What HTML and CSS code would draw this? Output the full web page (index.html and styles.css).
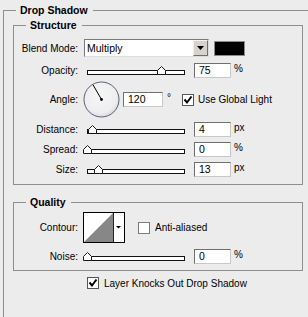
FILE: index.html
```html
<!DOCTYPE html>
<html>
<head>
<meta charset="UTF-8">
<title>Drop Shadow</title>
<link rel="stylesheet" href="styles.css">
</head>
<body>

<fieldset class="panel">
	<legend class="panel-title">Drop Shadow</legend>

	<fieldset class="group group-structure">
		<legend class="group-title">Structure</legend>

		<div class="row">
			<span class="label">Blend Mode:</span>
			<div class="select">
				<span class="select-value">Multiply</span>
				<span class="select-btn">
					<svg width="7" height="4" viewBox="0 0 7 4"><polygon points="0,0 7,0 3.5,4" fill="#000"/></svg>
				</span>
			</div>
			<span class="swatch"></span>
		</div>

		<div class="row row-opacity">
			<span class="label">Opacity:</span>
			<div class="slider">
				<div class="track"></div>
				<svg class="thumb" style="left: 70px" width="9" height="9" viewBox="0 0 9 9"><polygon points="4.5,0.5 8.5,4.5 8.5,8.5 0.5,8.5 0.5,4.5" fill="#fff" stroke="#1a1a1a"/></svg>
			</div>
			<span class="field">75</span>
			<span class="unit">%</span>
		</div>

		<div class="row row-angle">
			<span class="label">Angle:</span>
			<svg class="dial" width="37" height="37" viewBox="0 0 37 37">
				<defs>
					<radialGradient id="dialFill" cx="45%" cy="40%" r="60%">
						<stop offset="0" stop-color="#f6f6f6"/>
						<stop offset="0.8" stop-color="#eeeef0"/>
						<stop offset="1" stop-color="#d8dbe2"/>
					</radialGradient>
				</defs>
				<circle cx="18.5" cy="18.5" r="17.5" fill="url(#dialFill)" stroke="#5a6172"/>
				<line x1="18.5" y1="18.5" x2="10" y2="3.8" stroke="#000"/>
				<circle cx="18.5" cy="18.5" r="1.4" fill="#000"/>
			</svg>
			<span class="field field-angle">120</span>
			<span class="degree">&deg;</span>
			<span class="check checked">
				<svg width="10" height="10" viewBox="0 0 10 10"><path d="M1.5 4.5 L4 7.5 L8.5 1.5" fill="none" stroke="#000" stroke-width="2"/></svg>
			</span>
			<span class="check-text">Use Global Light</span>
		</div>

		<div class="row">
			<span class="label">Distance:</span>
			<div class="slider">
				<div class="track"></div>
				<svg class="thumb" style="left: 1px" width="9" height="9" viewBox="0 0 9 9"><polygon points="4.5,0.5 8.5,4.5 8.5,8.5 0.5,8.5 0.5,4.5" fill="#fff" stroke="#1a1a1a"/></svg>
			</div>
			<span class="field">4</span>
			<span class="unit">px</span>
		</div>

		<div class="row">
			<span class="label">Spread:</span>
			<div class="slider">
				<div class="track"></div>
				<svg class="thumb" style="left: -4px" width="9" height="9" viewBox="0 0 9 9"><polygon points="4.5,0.5 8.5,4.5 8.5,8.5 0.5,8.5 0.5,4.5" fill="#fff" stroke="#1a1a1a"/></svg>
			</div>
			<span class="field">0</span>
			<span class="unit">%</span>
		</div>

		<div class="row">
			<span class="label">Size:</span>
			<div class="slider">
				<div class="track"></div>
				<svg class="thumb" style="left: 7px" width="9" height="9" viewBox="0 0 9 9"><polygon points="4.5,0.5 8.5,4.5 8.5,8.5 0.5,8.5 0.5,4.5" fill="#fff" stroke="#1a1a1a"/></svg>
			</div>
			<span class="field">13</span>
			<span class="unit">px</span>
		</div>
	</fieldset>

	<fieldset class="group group-quality">
		<legend class="group-title">Quality</legend>

		<div class="row row-contour">
			<span class="label">Contour:</span>
			<svg class="contour" width="42" height="31" viewBox="0 0 42 31">
				<rect x="0.5" y="0.5" width="41" height="30" fill="#fff" stroke="#000"/>
				<polygon points="1,30 30,1 30,30" fill="#878787"/>
				<line x1="30.5" y1="1" x2="30.5" y2="30" stroke="#222"/>
				<polygon points="33,14 38,14 35.5,16.5" fill="#000"/>
			</svg>
			<span class="check check-anti"></span>
			<span class="check-text">Anti-aliased</span>
		</div>

		<div class="row row-noise">
			<span class="label">Noise:</span>
			<div class="slider">
				<div class="track"></div>
				<svg class="thumb" style="left: -4px" width="9" height="9" viewBox="0 0 9 9"><polygon points="4.5,0.5 8.5,4.5 8.5,8.5 0.5,8.5 0.5,4.5" fill="#fff" stroke="#1a1a1a"/></svg>
			</div>
			<span class="field">0</span>
			<span class="unit">%</span>
		</div>
	</fieldset>

	<div class="row row-knock">
		<span class="check checked">
			<svg width="10" height="10" viewBox="0 0 10 10"><path d="M1.5 4.5 L4 7.5 L8.5 1.5" fill="none" stroke="#000" stroke-width="2"/></svg>
		</span>
		<span class="check-text">Layer Knocks Out Drop Shadow</span>
	</div>
</fieldset>

</body>
</html>
```

FILE: styles.css
```css
html,
body
{
	margin: 0;
	height: 100%;
	overflow: hidden;
}

body
{
	background-color: #ececec;
	font-family: "Liberation Sans", Arial, sans-serif;
	font-size: 10px;
	color: #000;
}

.panel
{
	margin: 3px 0 0 3px;
	padding: 1px 0 0 9px;
	width: calc(100% - 3px);
	height: calc(100% - 3px);
	box-sizing: border-box;
	border: 1px solid #8e8e8e;
	border-right: none;
	border-bottom: none;
}

.panel-title,
.group-title
{
	padding: 0 5px 0 4px;
	font-size: 10.5px;
	font-weight: bold;
	line-height: 14px;
}

.panel-title
{
	margin-left: 3px;
}

.group
{
	margin: 0;
	width: 290px;
	box-sizing: border-box;
	border: 1px solid #8e8e8e;
}

.group-title
{
	margin-left: 12px;
}

.group-structure
{
	padding: 6px 0 5px 0;
}

.group-quality
{
	margin-top: 10px;
	padding: 3px 0 4px 0;
}

.row
{
	display: flex;
	align-items: center;
	height: 20px;
}

.row-opacity
{
	margin-top: 2px;
}

.row-angle
{
	height: 39px;
}

.row-contour
{
	height: 31px;
}

.row-noise
{
	margin-top: 3px;
}

.row-knock
{
	margin-top: 2px;
	padding-left: 74px;
}

.label
{
	width: 64px;
	flex: none;
	text-align: right;
}

/* blend mode */

.select
{
	display: flex;
	margin-left: 6px;
	width: 125px;
	height: 18px;
	box-sizing: border-box;
	border: 1px solid;
	border-color: #7a7a7a #dcdcdc #dcdcdc #7a7a7a;
	background-color: #fff;
}

.select-value
{
	flex: 1;
	padding-left: 2px;
	line-height: 16px;
	font-size: 10.5px;
}

.select-btn
{
	display: flex;
	align-items: center;
	justify-content: center;
	width: 15px;
	box-sizing: border-box;
	border: 1px solid;
	border-color: #f4f4f4 #6e6e6e #6e6e6e #f4f4f4;
	background-color: #d6d3ce;
}

.swatch
{
	margin-left: 5px;
	width: 31px;
	height: 15px;
	box-sizing: border-box;
	border: 1px solid #8a8a8a;
	background-color: #000;
}

/* sliders */

.slider
{
	position: relative;
	display: flex;
	align-items: flex-end;
	margin-left: 9px;
	width: 98px;
	height: 9px;
	flex: none;
}

.track
{
	width: 100%;
	height: 5px;
	box-sizing: border-box;
	border: 1px solid #111;
	background-color: #fff;
}

.thumb
{
	position: absolute;
	bottom: 0;
}

.field
{
	margin-left: 9px;
	width: 37px;
	height: 15px;
	box-sizing: border-box;
	padding-left: 4px;
	border: 1px solid;
	border-color: #6f6f6f #c8c8c8 #c8c8c8 #6f6f6f;
	background-color: #fff;
	line-height: 13px;
	font-size: 10.5px;
}

.unit
{
	margin-left: 3px;
	margin-top: -3px;
}

/* angle */

.dial
{
	margin-left: 5px;
	flex: none;
}

.field-angle
{
	margin-left: 3px;
	width: 40px;
}

.degree
{
	margin-left: 4px;
	margin-top: -4px;
}

.check
{
	display: flex;
	align-items: center;
	justify-content: center;
	margin-left: 11px;
	width: 12px;
	height: 12px;
	flex: none;
	box-sizing: border-box;
	border: 1px solid #555;
	background-color: #fff;
}

.row-knock .check
{
	margin-left: 0;
}

.check-anti
{
	margin-left: 13px;
	border-color: #7a7a7a;
}

.check-text
{
	margin-left: 4px;
}

.check-anti + .check-text
{
	margin-left: 5px;
}

.row-knock .check-text
{
	margin-left: 5px;
}

/* quality */

.contour
{
	margin-left: 5px;
	flex: none;
}
```
